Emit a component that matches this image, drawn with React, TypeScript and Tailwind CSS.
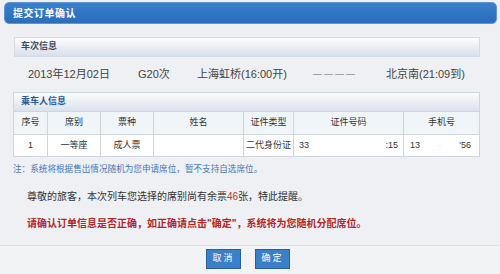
const cjk = "font-['Liberation_Sans','Noto_Sans_CJK_SC',sans-serif]";

const cols = [
  { label: '序号', w: 'w-[34px]', value: '1' },
  { label: '席别', w: 'w-[53px]', value: '一等座' },
  { label: '票种', w: 'w-[53px]', value: '成人票' },
  { label: '姓名', w: 'w-[90px]', value: '' },
  { label: '证件类型', w: 'w-[50px]', value: '二代身份证' },
];

export default function App() {
  return (
    <div className={`w-[500px] h-[274px] overflow-hidden bg-[#eef0f3] ${cjk}`}>
      <div className="pt-[2px] px-[4px]">
        <div className="h-[22px] w-[493px] rounded-[5px] bg-gradient-to-b from-[#3a80cc] to-[#2a6dba] border border-[#5d95d2] flex items-center pl-[8px]">
          <span className="text-[10px] font-bold text-white tracking-[0.5px]">提交订单确认</span>
        </div>
      </div>

      <div className="ml-[14px] w-[466px]">
        <div className="mt-[13px] h-[20px] border border-[#d3dae3] bg-gradient-to-b from-[#fdfdfe] to-[#d8e0ea] flex items-center pl-[6px]">
          <span className="text-[9px] font-bold text-[#3c4b5e]">车次信息</span>
        </div>
        <div className="h-[35px] flex items-center pl-[14px] text-[11px] text-[#444]">
          <span className="w-[110px]">2013年12月02日</span>
          <span className="w-[59px]">G20次</span>
          <span className="w-[116px]">上海虹桥(16:00开)</span>
          <span className="w-[73px] text-[#666] text-[9px] tracking-[2px]">————</span>
          <span>北京南(21:09到)</span>
        </div>
      </div>

      <div className="ml-[13px] w-[467px] border border-[#cdd5df] bg-white">
        <div className="h-[19px] bg-gradient-to-b from-[#fbfcfd] to-[#d9e2ec] border-b border-[#cdd5df] flex items-center pl-[7px]">
          <span className="text-[9px] font-bold text-[#2d5a94]">乘车人信息</span>
        </div>
        <div className="flex h-[23px] bg-[#f0f5fa] border-b border-[#cdd5df] text-[9px] text-[#333]">
          {cols.map((c) => (
            <div key={c.label} className={`${c.w} border-r border-[#cdd5df] flex items-center justify-center`}>{c.label}</div>
          ))}
          <div className="w-[110px] border-r border-[#cdd5df] flex items-center justify-center">证件号码</div>
          <div className="flex-1 flex items-center justify-center">手机号</div>
        </div>
        <div className="flex h-[21px] text-[9px] text-[#333]">
          {cols.map((c) => (
            <div key={c.label} className={`${c.w} border-r border-[#cdd5df] flex items-center justify-center whitespace-nowrap`}>{c.value}</div>
          ))}
          <div className="w-[110px] border-r border-[#cdd5df] flex items-center justify-between px-[5px]">
            <span>33</span>
            <span>:15</span>
          </div>
          <div className="flex-1 flex items-center justify-between pl-[6px] pr-[8px]">
            <span>13</span>
            <span className="text-[#ccc]">·</span>
            <span>'56</span>
          </div>
        </div>
      </div>

      <div className="ml-[13px] mt-[6px] text-[8.6px] leading-[12px] text-[#4a76b8] whitespace-nowrap">
        注：系统将根据售出情况随机为您申请席位，暂不支持自选席位。
      </div>

      <div className="ml-[27px] mt-[15px] text-[10px] leading-[14px] text-[#333] whitespace-nowrap">
        尊敬的旅客，本次列车您选择的席别尚有余票<span className="text-[#c0392b]">46</span>张，特此提醒。
      </div>
      <div className="ml-[27px] mt-[13px] text-[10px] leading-[14px] font-bold text-[#b3262a] whitespace-nowrap">
        请确认订单信息是否正确，如正确请点击"确定"，系统将为您随机分配席位。
      </div>

      <div className="mt-[14px] border-t border-[#dde1e6] bg-[#f2f3f5] h-[40px] flex justify-center gap-[14px] pt-[3px] pr-[4px]">
        <button className="w-[35px] h-[20px] bg-[#3a80c8] border border-[#2b5f99] text-white text-[9px] tracking-[2px]">取消</button>
        <button className="w-[35px] h-[20px] bg-[#3a80c8] border border-[#2b5f99] text-white text-[9px] tracking-[2px]">确定</button>
      </div>
    </div>
  );
}
